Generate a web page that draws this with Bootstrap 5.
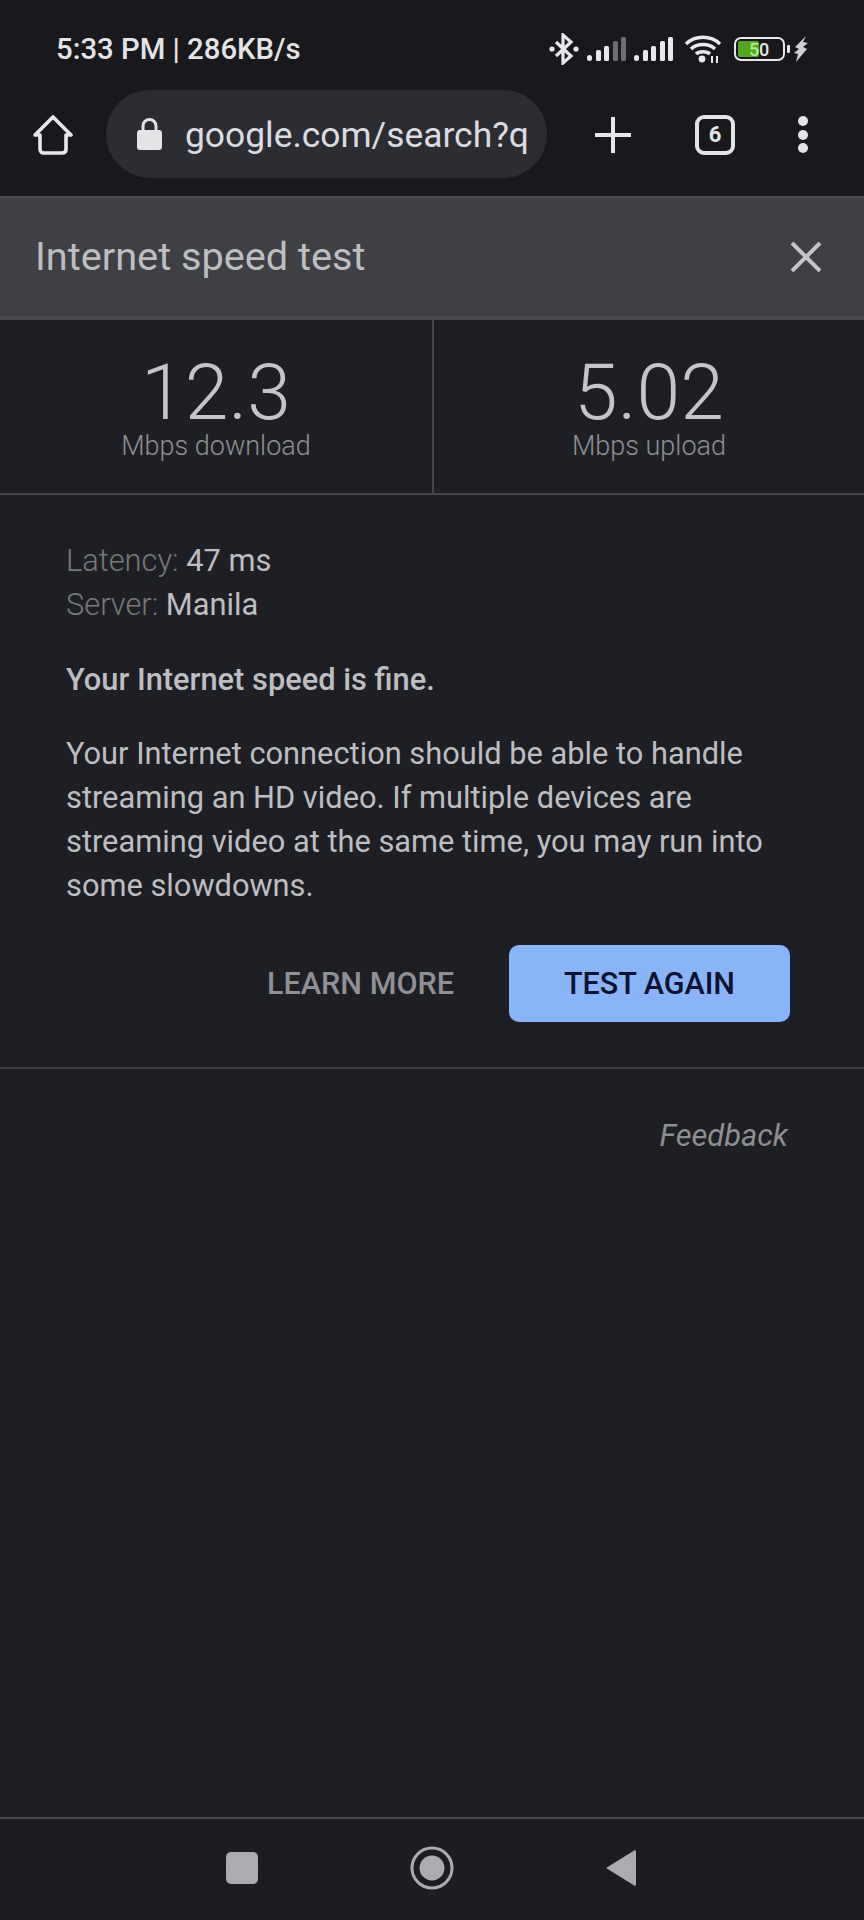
<!DOCTYPE html>
<html lang="en">
<head>
    <meta charset="UTF-8">
    <title>Internet speed test</title>
    <link href="https://cdn.jsdelivr.net/npm/bootstrap@5.3.3/dist/css/bootstrap.min.css" rel="stylesheet">
    <style>
        body { background: #1e1f24; font-family: Roboto, "Liberation Sans", sans-serif; color: #bdbec1; }
        .phone { width: 864px; height: 1920px; overflow: hidden; }
        svg { display: block; flex-shrink: 0; }

        .status-row { height: 90px; padding: 9px 0 0 56px; background: #18181d; color: #e4e4e7; font-size: 29.3px; font-weight: 500; }
        .status-icons { margin-left: auto; margin-right: 56px; margin-top: -1px; }
        .gap-7 { margin-left: 7px; }
        .gap-8 { margin-left: 8px; }
        .gap-10 { margin-left: 10px; }
        .gap-12 { margin-left: 12px; }

        .tool-row { height: 106px; padding: 0 0 18px 33px; background: #18181d; }
        .home-icon { margin-top: 2px; }
        .url-pill { width: 441px; height: 88px; margin-left: 33px; padding-left: 31px; border-radius: 44px; background: #2b2d33; color: #dcdce0; font-size: 35.4px; }
        .url-text { margin-left: 23px; padding-top: 4px; white-space: nowrap; }
        .tool-plus { margin-left: 48px; margin-top: 2px; }
        .tab-count { width: 40px; height: 40px; margin-left: 64px; margin-top: 2px; border: 4px solid #e4e4e7; border-radius: 9px; color: #e4e4e7; font-size: 22px; font-weight: 700; line-height: 1; }
        .tool-dots { margin-left: 62px; margin-top: 2px; }

        .card-head { height: 124px; padding: 0 42px 0 35px; background: #3f4044; border-top: 2px solid #4a4b4f; border-bottom: 4px solid #4a4b4f; color: #bdbec1; font-size: 39.7px; }

        .stat-row { height: 175px; border-bottom: 2px solid #45464a; }
        .stat-cell { width: 433px; padding-top: 34px; }
        .stat-cell + .stat-cell { border-left: 2px solid #45464a; }
        .stat-num { font-size: 78.7px; font-weight: 300; line-height: 76px; color: #c4c5c8; }
        .stat-label { font-size: 27px; line-height: 30px; font-weight: 300; color: #8f9093; margin-top: 1px; }

        .result-box { padding: 44px 74px 0 66px; font-size: 30.8px; line-height: 44px; }
        .dim-label { color: #77787c; font-weight: 300; }
        .result-box p { margin: 0; }
        .verdict { margin-top: 31px !important; font-weight: 500; }
        .advice { margin-top: 30px !important; }
        .result-actions { margin-top: 37px; padding-bottom: 45px; }
        .learn-link { color: #8f9093; font-size: 30.6px; font-weight: 500; margin-right: 55px; }
        .again-btn { width: 281px; height: 77px; padding: 0; border: 0; border-radius: 10px; background: #8ab4f8; color: #0d1230; font-size: 30.5px; font-weight: 500; }
        .rule-line { height: 2px; background: #3f4044; }
        .feedback-row { padding: 49px 76px 0 0; color: #8d8e91; font-size: 30.8px; font-style: italic; line-height: 36px; }

        .nav-row { height: 103px; background: #1c1c21; border-top: 2px solid #47484c; padding: 0 228px 3px 226px; }
    </style>
</head>
<body class="m-0">
<div class="phone d-flex flex-column">

    <div class="status-row d-flex align-items-center">
        <span>5:33 PM | 286KB/s</span>
        <div class="status-icons d-flex align-items-center">
            <svg width="30" height="32" viewBox="0 0 30 32" fill="none" stroke="#e8e8ea" stroke-width="3.2">
                <path d="M7 9 L22 23 L14 30 V2 L22 9 L7 23"/>
                <circle cx="3" cy="16" r="2.6" fill="#e8e8ea" stroke="none"/>
                <circle cx="27" cy="16" r="2.6" fill="#e8e8ea" stroke="none"/>
            </svg>
            <svg class="gap-8" width="40" height="26" viewBox="0 0 40 26">
                <rect x="0" y="19" width="5" height="6" rx="2.5" fill="#e8e8ea"/>
                <rect x="9" y="14" width="5" height="11" rx="1.5" fill="#e8e8ea"/>
                <rect x="17" y="10" width="5" height="15" rx="1.5" fill="#e8e8ea"/>
                <rect x="26" y="5" width="5" height="20" rx="1.5" fill="#6e6e72"/>
                <rect x="34" y="1" width="5" height="24" rx="1.5" fill="#6e6e72"/>
            </svg>
            <svg class="gap-7" width="40" height="26" viewBox="0 0 40 26" fill="#e8e8ea">
                <rect x="0" y="19" width="5" height="6" rx="2.5"/>
                <rect x="9" y="14" width="5" height="11" rx="1.5"/>
                <rect x="17" y="10" width="5" height="15" rx="1.5"/>
                <rect x="26" y="5" width="5" height="20" rx="1.5"/>
                <rect x="34" y="1" width="5" height="24" rx="1.5"/>
            </svg>
            <svg class="gap-10" width="38" height="30" viewBox="0 0 38 30" fill="none" stroke="#e8e8ea" stroke-width="3.4">
                <path d="M2 10 C11 1 27 1 36 10"/>
                <path d="M7 15 C13 9 25 9 31 15"/>
                <path d="M12 20 C15 17 23 17 26 20"/>
                <circle cx="18" cy="25" r="3.4" fill="#e8e8ea" stroke="none"/>
                <path d="M28 22 V29 M33 22 V29" stroke-width="2"/>
            </svg>
            <svg class="gap-12" width="56" height="26" viewBox="0 0 56 26">
                <rect x="1" y="2" width="49" height="22" rx="6" fill="none" stroke="#e8e8ea" stroke-width="2"/>
                <rect x="4" y="5" width="21" height="16" rx="2" fill="#55a61f"/>
                <rect x="53" y="9" width="3" height="8" rx="1" fill="#e8e8ea"/>
                <text x="15" y="20" font-family="Roboto, sans-serif" font-size="18" fill="#b9e58f">5</text>
                <text x="25" y="20" font-family="Roboto, sans-serif" font-size="18" fill="#e8e8ea">0</text>
            </svg>
            <svg class="ms-1" width="14" height="26" viewBox="0 0 14 26" fill="#d0d0d3">
                <path d="M12 0 L1 11 L5 13 L0 17 L4 18 L2 26 L13 13 L9 11 L14 7 L9 6 Z"/>
            </svg>
        </div>
    </div>

    <div class="tool-row d-flex align-items-center">
        <svg class="home-icon" width="40" height="40" viewBox="0 0 40 40" fill="none" stroke="#e8e8ea" stroke-width="3.6" stroke-linejoin="round" stroke-linecap="round">
            <path d="M2 20 L20 2 L38 20 H33 V34 Q33 38 29 38 H11 Q7 38 7 34 V20 Z"/>
        </svg>
        <div class="url-pill d-flex align-items-center">
            <svg width="25" height="32" viewBox="0 0 25 32">
                <path d="M6 13 V8 A6.5 6.5 0 0 1 19 8 V13" fill="none" stroke="#e4e4e7" stroke-width="3"/>
                <rect x="0" y="12" width="25" height="20" rx="3" fill="#e4e4e7"/>
            </svg>
            <span class="url-text">google.com/search?q</span>
        </div>
        <svg class="tool-plus" width="36" height="36" viewBox="0 0 36 36" stroke="#e8e8ea" stroke-width="4">
            <path d="M0 18 H36 M18 0 V36"/>
        </svg>
        <div class="tab-count d-flex align-items-center justify-content-center">6</div>
        <svg class="tool-dots" width="12" height="40" viewBox="0 0 12 40" fill="#e4e4e7">
            <circle cx="6" cy="6" r="5"/>
            <circle cx="6" cy="20" r="5"/>
            <circle cx="6" cy="33" r="5"/>
        </svg>
    </div>

    <div class="card-head d-flex align-items-center justify-content-between">
        <span>Internet speed test</span>
        <svg width="32" height="30" viewBox="0 0 32 30" stroke="#c4c5c8" stroke-width="4">
            <path d="M2 1 L30 29 M30 1 L2 29"/>
        </svg>
    </div>

    <div class="stat-row d-flex">
        <div class="stat-cell text-center">
            <div class="stat-num">12.3</div>
            <div class="stat-label">Mbps download</div>
        </div>
        <div class="stat-cell text-center">
            <div class="stat-num">5.02</div>
            <div class="stat-label">Mbps upload</div>
        </div>
    </div>

    <div class="result-box">
        <p><span class="dim-label">Latency:</span> 47 ms</p>
        <p><span class="dim-label">Server:</span> Manila</p>
        <p class="verdict">Your Internet speed is fine.</p>
        <p class="advice">Your Internet connection should be able to handle streaming an HD video. If multiple devices are streaming video at the same time, you may run into some slowdowns.</p>
        <div class="result-actions d-flex align-items-center justify-content-end">
            <span class="learn-link">LEARN MORE</span>
            <button type="button" class="btn again-btn">TEST AGAIN</button>
        </div>
    </div>
    <div class="rule-line"></div>
    <div class="feedback-row text-end">Feedback</div>

    <div class="nav-row d-flex align-items-center justify-content-between mt-auto">
        <svg width="32" height="32" viewBox="0 0 32 32"><rect width="32" height="32" rx="5" fill="#acacb0"/></svg>
        <svg width="44" height="44" viewBox="0 0 44 44">
            <circle cx="22" cy="22" r="20" fill="none" stroke="#acacb0" stroke-width="3"/>
            <circle cx="22" cy="22" r="12.5" fill="#acacb0"/>
        </svg>
        <svg width="30" height="36" viewBox="0 0 30 36"><path d="M0 18 L29 0 Q30 0 30 2 V34 Q30 36 29 36 Z" fill="#acacb0"/></svg>
    </div>
</div>
<script src="https://cdn.jsdelivr.net/npm/bootstrap@5.3.3/dist/js/bootstrap.bundle.min.js"></script>
</body>
</html>
